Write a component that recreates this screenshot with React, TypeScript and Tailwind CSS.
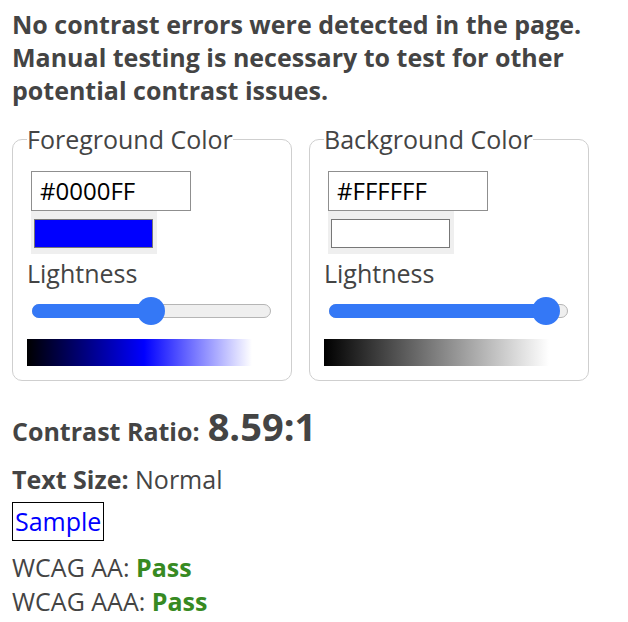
const font = { fontFamily: '"Open Sans", "Liberation Sans", sans-serif' };

function ColorBox({
  label,
  hex,
  swatch,
  thumbPct,
  gradient,
}: {
  label: string;
  hex: string;
  swatch: string;
  thumbPct: number;
  gradient: string;
}) {
  return (
    <fieldset className="w-[280px] rounded-[10px] border border-[#cfcfcf] pl-[14px] pr-4 pb-[14px]">
      <legend className="px-0 text-[25px] leading-[33px] text-[#444]">{label}</legend>
      <div className="ml-1 mt-[15px] flex h-10 w-40 items-center border border-[#8f8f8f] pl-2 text-[24px] text-black">
        {hex}
      </div>
      <div className="ml-1 w-[126px] bg-[#efefef] pb-[6px] pl-[3px] pr-1 pt-2">
        <div className="h-[29px] border border-[#777]" style={{ background: swatch }} />
      </div>
      <div className="pt-[3px] text-[25px] leading-[33px] text-[#444]">Lightness</div>
      <div className="relative ml-[5px] mt-[7px] h-7 w-[239px]">
        <div className="absolute left-0 right-0 top-[7px] h-[14px] rounded-full border border-[#b5b5b5] bg-[#efefef]" />
        <div
          className="absolute left-0 top-[7px] h-[14px] rounded-full bg-[#3478f6]"
          style={{ width: `${thumbPct}px` }}
        />
        <div
          className="absolute top-0 h-7 w-7 rounded-full bg-[#3478f6]"
          style={{ left: `${thumbPct - 14}px` }}
        />
      </div>
      <div className="mt-[14px] h-[27px] w-[225px]" style={{ background: gradient }} />
    </fieldset>
  );
}

export default function App() {
  return (
    <div className="min-h-[622px] w-[628px] bg-white px-3 pt-2 text-[#444]" style={font}>
      <p className="text-[25px] font-bold leading-[33px]">
        No contrast errors were detected in the page. Manual testing is necessary to test for other
        potential contrast issues.
      </p>

      <div className="mt-4 flex gap-[17px]">
        <ColorBox
          label="Foreground Color"
          hex="#0000FF"
          swatch="#0000ff"
          thumbPct={119}
          gradient="linear-gradient(to right, #000000, #0000ff 52%, #ffffff)"
        />
        <ColorBox
          label="Background Color"
          hex="#FFFFFF"
          swatch="#ffffff"
          thumbPct={217}
          gradient="linear-gradient(to right, #000000, #ffffff)"
        />
      </div>

      <div className="mt-[25px] flex items-baseline gap-2">
        <span className="text-[25px] font-bold">Contrast Ratio:</span>
        <span className="text-[38px] font-bold leading-[40px]">8.59:1</span>
      </div>

      <div className="mt-[12px] text-[25px] leading-[33px]">
        <span className="font-bold">Text Size:</span> Normal
      </div>

      <div className="mt-[6px] inline-block border border-black bg-white px-[2px] text-[25px] leading-[37px] text-[#0000ff]">
        Sample
      </div>

      <div className="mt-[9px] text-[25px] leading-[34px]">
        <div>
          WCAG AA: <span className="font-bold text-[#378a22]">Pass</span>
        </div>
        <div>
          WCAG AAA: <span className="font-bold text-[#378a22]">Pass</span>
        </div>
      </div>
    </div>
  );
}
